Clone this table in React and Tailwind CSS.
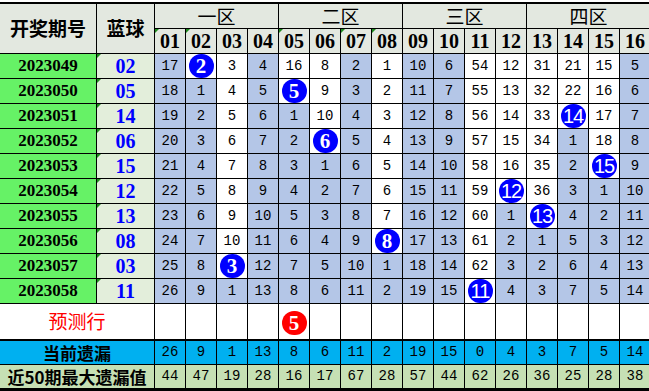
import React from 'react';

// 遗漏值矩阵：每期 16 个号码的遗漏，开出号码位置由蓝球决定
const draws = [
  { id: '2023049', blue: 2, miss: [17, 0, 3, 4, 16, 8, 2, 1, 10, 6, 54, 12, 31, 21, 15, 5] },
  { id: '2023050', blue: 5, miss: [18, 1, 4, 5, 0, 9, 3, 2, 11, 7, 55, 13, 32, 22, 16, 6] },
  { id: '2023051', blue: 14, miss: [19, 2, 5, 6, 1, 10, 4, 3, 12, 8, 56, 14, 33, 0, 17, 7] },
  { id: '2023052', blue: 6, miss: [20, 3, 6, 7, 2, 0, 5, 4, 13, 9, 57, 15, 34, 1, 18, 8] },
  { id: '2023053', blue: 15, miss: [21, 4, 7, 8, 3, 1, 6, 5, 14, 10, 58, 16, 35, 2, 0, 9] },
  { id: '2023054', blue: 12, miss: [22, 5, 8, 9, 4, 2, 7, 6, 15, 11, 59, 0, 36, 3, 1, 10] },
  { id: '2023055', blue: 13, miss: [23, 6, 9, 10, 5, 3, 8, 7, 16, 12, 60, 1, 0, 4, 2, 11] },
  { id: '2023056', blue: 8, miss: [24, 7, 10, 11, 6, 4, 9, 0, 17, 13, 61, 2, 1, 5, 3, 12] },
  { id: '2023057', blue: 3, miss: [25, 8, 0, 12, 7, 5, 10, 1, 18, 14, 62, 3, 2, 6, 4, 13] },
  { id: '2023058', blue: 11, miss: [26, 9, 1, 13, 8, 6, 11, 2, 19, 15, 0, 4, 3, 7, 5, 14] },
];

const current = [26, 9, 1, 13, 8, 6, 11, 2, 19, 15, 0, 4, 3, 7, 5, 14];
const maxMiss = [44, 47, 19, 28, 16, 17, 67, 28, 57, 44, 62, 26, 36, 25, 28, 38];
const zones = ['一区', '二区', '三区', '四区'];
const alwaysShaded = [0, 3, 6, 8, 9, 15];
const flagged = [0, 1, 4, 6, 7];

const firstHit = Array.from({ length: 16 }, (_, c) => draws.findIndex((d) => d.blue - 1 === c));

const pad = (n) => String(n).padStart(2, '0');

const Flag = () => (
  <span className="absolute top-0 left-0 w-0 h-0 border-t-[4px] border-r-[4px] border-t-[#1f8a1f] border-r-transparent" />
);

const Ball = ({ n, red = false }) => (
  <div
    className={
      red
        ? 'w-[25px] h-[24px] rounded-full bg-[#ff0000] flex items-center justify-center'
        : 'w-[25px] h-[24px] rounded-full bg-[#0000ff] flex items-center justify-center'
    }
  >
    {n < 10 ? (
      <span className="text-white font-bold text-[21px] leading-none font-['Liberation_Serif',serif]">{n}</span>
    ) : (
      <span className="text-white text-[20px] leading-none tracking-[-1px] font-['Liberation_Sans',sans-serif]">{n}</span>
    )}
  </div>
);

const num = "flex items-center justify-center text-[14px] text-black font-['Liberation_Mono',monospace]";

export default function App() {
  return (
    <div className="w-[649px] h-[391px] overflow-hidden bg-white pt-[2px]">
      <div className="grid w-[650px] grid-cols-[96px_57px_repeat(16,30px)] grid-rows-[24px_24px_repeat(10,24px)_35px_24px_23px] gap-px bg-black border-t-2 border-b-[3px] border-black">
        {/* 表头 */}
        <div className="row-span-2 bg-[#e3e8e0] flex items-center justify-center font-bold text-[19px] text-black font-['Noto_Sans_CJK_SC',sans-serif]">
          开奖期号
        </div>
        <div className="row-span-2 bg-[#e3e8e0] flex items-center justify-center font-bold text-[19px] text-black font-['Noto_Sans_CJK_SC',sans-serif]">
          蓝球
        </div>
        {zones.map((z) => (
          <div key={z} className="col-span-4 bg-[#e3e8e0] flex items-center justify-center text-[19px] text-black font-['Noto_Sans_CJK_SC',sans-serif]">
            {z}
          </div>
        ))}
        {Array.from({ length: 16 }, (_, i) => (
          <div key={i} className="relative bg-[#e3e8e0] flex items-center justify-center font-bold text-[20px] text-black font-['Liberation_Serif',serif]">
            {flagged.includes(i) && <Flag />}
            {pad(i + 1)}
          </div>
        ))}

        {/* 开奖数据 */}
        {draws.map((d, r) => (
          <React.Fragment key={d.id}>
            <div className="bg-[#66f266] flex items-center justify-center font-bold text-[17px] text-black font-['Liberation_Serif',serif]">
              {d.id}
            </div>
            <div className="relative bg-[#e3eedb] flex items-center justify-center font-bold text-[20px] text-[#0000ff] font-['Liberation_Serif',serif]">
              <Flag />
              {pad(d.blue)}
            </div>
            {d.miss.map((v, c) => {
              if (d.blue - 1 === c) {
                return (
                  <div key={c} className="bg-white flex items-center justify-center">
                    <Ball n={d.blue} />
                  </div>
                );
              }
              const shaded = alwaysShaded.includes(c) || r > firstHit[c];
              return (
                <div key={c} className={shaded ? `${num} bg-[#b4c6e7]` : `${num} bg-white`}>
                  {v}
                </div>
              );
            })}
          </React.Fragment>
        ))}

        {/* 预测行 */}
        <div className="col-span-2 bg-white flex items-center justify-center text-[19px] text-[#ff0000] font-['Noto_Sans_CJK_SC',sans-serif]">
          预测行
        </div>
        {Array.from({ length: 16 }, (_, c) => (
          <div key={c} className="bg-white flex items-center justify-center pt-[3px]">
            {c === 4 && <Ball n={5} red />}
          </div>
        ))}

        {/* 当前遗漏 */}
        <div className="col-span-2 bg-[#00b0f0] border-t border-black flex items-center justify-center font-bold text-[17px] text-black font-['Noto_Sans_CJK_SC',sans-serif]">
          当前遗漏
        </div>
        {current.map((v, c) => (
          <div key={c} className={`${num} bg-[#00b0f0] border-t border-black`}>
            {v}
          </div>
        ))}

        {/* 近50期最大遗漏值 */}
        <div className="col-span-2 bg-[#c6e0b4] flex items-center justify-center font-bold text-[17px] text-black font-['Noto_Sans_CJK_SC',sans-serif]">
          近50期最大遗漏值
        </div>
        {maxMiss.map((v, c) => (
          <div key={c} className={`${num} bg-[#c6e0b4]`}>
            {v}
          </div>
        ))}
      </div>
    </div>
  );
}
